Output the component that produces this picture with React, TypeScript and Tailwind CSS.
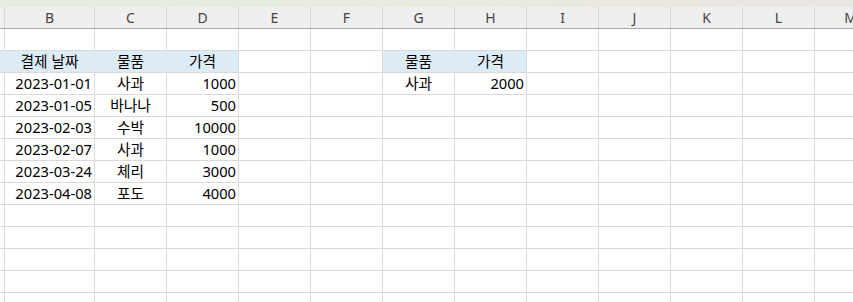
import React from "react";

const COLS = ["A", "B", "C", "D", "E", "F", "G", "H", "I", "J", "K", "L", "M"];
const WIDTHS: Record<string, string> = {
  A: "w-[5px]",
  B: "w-[90px]",
};

type Cell = { text: string; align?: "left" | "center" | "right"; fill?: boolean };
type Row = Record<string, Cell>;

const h = (text: string): Cell => ({ text, align: "center", fill: true });
const c = (text: string): Cell => ({ text, align: "center" });
const r = (text: string): Cell => ({ text, align: "right" });

const rows: Row[] = [
  {},
  { A: { text: "", fill: true }, B: h("결제 날짜"), C: h("물품"), D: h("가격"), G: h("물품"), H: h("가격") },
  { B: r("2023-01-01"), C: c("사과"), D: r("1000"), G: c("사과"), H: r("2000") },
  { B: r("2023-01-05"), C: c("바나나"), D: r("500") },
  { B: r("2023-02-03"), C: c("수박"), D: r("10000") },
  { B: r("2023-02-07"), C: c("사과"), D: r("1000") },
  { B: r("2023-03-24"), C: c("체리"), D: r("3000") },
  { B: r("2023-04-08"), C: c("포도"), D: r("4000") },
  {},
  {},
  {},
  {},
  {},
];

// cells whose right edge sits inside a filled range
const filledRight = new Set(["B", "C", "G"]);

function colWidth(col: string) {
  return WIDTHS[col] ?? "w-[72px]";
}

export default function App() {
  return (
    <div
      className="w-[853px] h-[302px] overflow-hidden bg-white text-black"
      style={{ fontFamily: '"Noto Sans", "Noto Sans CJK KR", sans-serif' }}
    >
      <div className="h-[7px] bg-gradient-to-r from-[#e3ecdf] via-[#e8eadf] to-[#ece5e0]" />
      <div className="flex h-[22px] bg-[#efefef] border-b border-[#a9a9a9] text-[#444444] text-[14px] leading-none">
        {COLS.map((col) => (
          <div
            key={col}
            className={`${colWidth(col)} shrink-0 h-full flex items-center justify-center border-r border-[#d6d6d6]`}
          >
            {col === "A" ? "" : col}
          </div>
        ))}
      </div>
      {rows.map((row, i) => (
        <div key={i} className="flex h-[22px] border-b border-[#dadada] text-[14.7px] leading-none">
          {COLS.map((col) => {
            const cell = row[col];
            const fill = cell?.fill;
            const noRight = fill && (filledRight.has(col) || col === "A");
            const align =
              cell?.align === "right"
                ? "justify-end pr-[2px]"
                : cell?.align === "center"
                ? "justify-center"
                : "justify-start pl-[2px]";
            return (
              <div
                key={col}
                className={`${colWidth(col)} shrink-0 h-full flex items-center whitespace-nowrap ${align} ${
                  fill ? "bg-[#ddebf7]" : ""
                } ${noRight ? "border-r border-[#ddebf7]" : "border-r border-[#dadada]"}`}
              >
                {cell?.text}
              </div>
            );
          })}
        </div>
      ))}
    </div>
  );
}
